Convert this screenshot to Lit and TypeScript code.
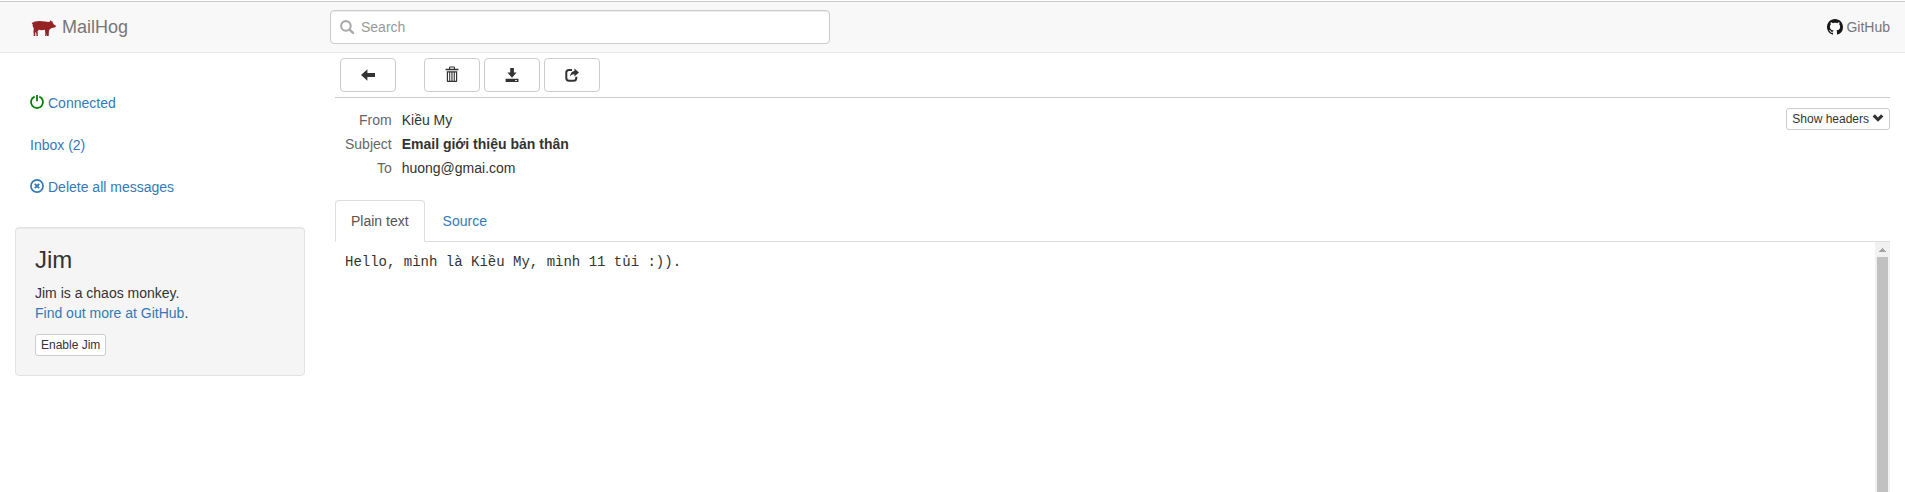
import { LitElement, html, css, svg } from "lit";
import { customElement, property } from "lit/decorators.js";

const shapes: Record<string, unknown> = {
  off: svg`<path d="M4.7 1.6A6 6 0 1 0 9.3 1.6" fill="none" stroke="currentColor" stroke-width="1.8"/><path d="M6.1 0h1.8v6.2H6.1z"/>`,
  remove: svg`<circle cx="7" cy="7" r="6.05" fill="none" stroke="currentColor" stroke-width="1.7"/><path d="M4.8 4.8l4.4 4.4M9.2 4.8L4.8 9.2" stroke="currentColor" stroke-width="1.9"/>`,
  search: svg`<circle cx="5.9" cy="5.9" r="4.8" fill="none" stroke="currentColor" stroke-width="2.1"/><path d="M9.6 9.6l3.4 3.3" stroke="currentColor" stroke-width="2.5" stroke-linecap="round"/>`,
  arrow: svg`<path d="M0 7l6.4-5.8v3.9H14v3.8H6.4v3.9z"/>`,
  trash: svg`<path fill-rule="evenodd" d="M4 .8V-.5Q4-1.4 5-1.4h4q1 0 1 .9V.8h3.4v1.4H.6V.8zM5.1.8h3.8V-.4H5.1zM1.8 3.2h10.4V13q0 1-1 1H2.8q-1 0-1-1zM3 4.4v8.4h1.2V4.4zM5.2 4.4v8.4h1.2V4.4zM7.5 4.4v8.4h1.2V4.4zM9.8 4.4v8.4H11V4.4z"/>`,
  download: svg`<path fill-rule="evenodd" d="M5.2 0h3.7v4.5h2.7L7 9.8 2.4 4.5h2.8zM.6 10.7h12.9V14H.6zM10.2 12v.9h1.7V12z"/>`,
  share: svg`<path d="M7 1.9H4Q1.3 1.9 1.3 4.6v5.5q0 2.7 2.7 2.7h4.7q2.6 0 2.6-2.7V8.8" fill="none" stroke="currentColor" stroke-width="2"/><path d="M9.4.6L14 4.6 9.4 8.6V6.2Q6.6 6 5 8.5 5.6 3.3 9.4 3z"/>`,
};

@customElement("mh-icon")
export class MhIcon extends LitElement {
  @property() name = "";
  static styles = css`
    :host { display: inline-block; width: 14px; height: 14px; line-height: 0; flex: none; }
    svg { width: 14px; height: 14px; overflow: visible; fill: currentColor; display: block; }
  `;
  render() {
    return html`<svg viewBox="0 0 14 14" aria-hidden="true">${shapes[this.name]}</svg>`;
  }
}

@customElement("app-root")
export class AppRoot extends LitElement {
  static styles = css`
    * { box-sizing: border-box; }
    :host {
      display: flex; flex-direction: column; height: 492px; overflow: hidden; background: #fff;
      font: 14px/20px "Liberation Sans", Arial, sans-serif; color: #333;
    }
    a { color: #337ab7; text-decoration: none; }
    .navbar {
      flex: none; height: 52px; margin-top: 1px; display: flex; align-items: center;
      background: #f8f8f8; border-top: 1px solid #c9cccb; border-bottom: 1px solid #e7e7e7;
      padding: 0 15px;
    }
    .brand { display: flex; align-items: center; width: 315px; padding-left: 16px; font-size: 18px; color: #777; }
    .pig { width: 25px; height: 18px; margin: 2px 6px 0 0; }
    .search {
      display: flex; align-items: center; gap: 7px; width: 500px; height: 34px; padding: 0 9px;
      background: #fff; border: 1px solid #ccc; border-radius: 4px; color: #999;
      box-shadow: inset 0 1px 1px rgba(0, 0, 0, .075);
    }
    .search mh-icon { color: #aaa; }
    .github { display: flex; align-items: center; gap: 3px; margin-left: auto; color: #777; }
    .mark { width: 16px; height: 16px; fill: #181616; }
    .columns { flex: 1; min-height: 0; display: flex; gap: 30px; padding: 0 15px; }
    aside { width: 290px; padding-top: 30px; }
    .nav { display: flex; flex-direction: column; gap: 2px; margin-bottom: 20px; }
    .nav a { display: flex; align-items: center; gap: 4px; height: 40px; padding-left: 15px; }
    .nav mh-icon { margin-top: -2px; }
    .on { color: #008000; }
    .well {
      height: 149px; padding: 19px; background: #f5f5f5; border: 1px solid #e3e3e3;
      border-radius: 4px; box-shadow: inset 0 1px 1px rgba(0, 0, 0, .05);
    }
    h3 { margin: 0 0 10px; font-weight: 400; font-size: 24px; line-height: 26.4px; }
    p { margin: 0 0 10.6px; }
    button {
      font: inherit; color: #333; background: #fff; border: 1px solid #ccc; border-radius: 4px;
      display: flex; align-items: center; justify-content: center; padding: 0;
    }
    .small { height: 22px; padding: 0 5px; font-size: 12px; line-height: 18px; border-radius: 3px; }
    main { flex: 1; min-width: 0; display: flex; flex-direction: column; }
    .toolbar { flex: none; display: flex; gap: 4px; height: 45px; padding: 5px; border-bottom: 1px solid #ccc; }
    .toolbar button { width: 56px; height: 34px; }
    .back { margin-right: 24px; }
    .meta { flex: none; display: flex; align-items: flex-start; justify-content: space-between; height: 102px; padding-top: 10px; }
    dl { display: grid; grid-template-columns: 56.7px auto; column-gap: 10px; row-gap: 4px; margin: 2px 0 0; }
    dt { text-align: right; color: #666; }
    dd { margin: 0; }
    .subject { font-weight: 700; }
    .chevron { width: 12px; height: 12px; margin: -2px 0 0 3px; }
    .tabs { flex: none; display: flex; gap: 2px; height: 42px; border-bottom: 1px solid #ddd; }
    .tab { height: 42px; padding: 10px 15px; border: 1px solid transparent; border-radius: 4px 4px 0 0; }
    .active { color: #555; background: #fff; border-color: #ddd #ddd #fff; }
    .body { flex: 1; min-height: 0; display: flex; justify-content: space-between; }
    pre { margin: 0; padding: 10px; font: 14px/20px "Liberation Mono", monospace; }
    .track { width: 15px; display: flex; flex-direction: column; align-items: center; background: #f1f1f1; }
    .up { width: 7px; height: 4px; margin: 6px 0 5px; fill: #a3a3a3; }
    .thumb { width: 11px; flex: 1; background: #c1c1c1; }
  `;

  render() {
    return html`
      <header class="navbar">
        <div class="brand">
          <svg class="pig" viewBox="0 0 25 18" fill="#952225" aria-hidden="true">
            <path d="M1 3.2L1.9 4Q2.2 2.8 4 2.4Q9 1.6 14 2.6L17.5 2.9L19 2.6L19.4 1.1L20.6 2.6L21.4 2.2L21.7 3.6L22.8 5.4L24.9 6.7L24.7 8L23.3 8.6L20.6 8.9L18.6 10.6L17.9 12L17.7 16.9H15.9L15.8 15L15.3 16.9H14L14.4 15.5L13.9 10.8Q10.5 11.6 7.8 10.8L6.6 12.2L6.9 16.9H5.3L5.5 16L4.9 13L4.2 14L4.3 16.9H2.5L2.8 15.5L2.4 12.5L2.8 9.5L1.6 6.8L1.7 5.2L.9 4.4Z"/>
          </svg>MailHog
        </div>
        <div class="search"><mh-icon name="search"></mh-icon><span>Search</span></div>
        <a class="github">
          <svg class="mark" viewBox="0 0 16 16" aria-hidden="true"><path d="M8 0C3.58 0 0 3.58 0 8c0 3.54 2.29 6.53 5.47 7.59.4.07.55-.17.55-.38 0-.19-.01-.82-.01-1.49-2.01.37-2.53-.49-2.69-.94-.09-.23-.48-.94-.82-1.13-.28-.15-.68-.52-.01-.53.63-.01 1.08.58 1.23.82.72 1.21 1.87.87 2.33.66.07-.52.28-.87.51-1.07-1.78-.2-3.64-.89-3.64-3.95 0-.87.31-1.59.82-2.15-.08-.2-.36-1.02.08-2.12 0 0 .67-.21 2.2.82.64-.18 1.32-.27 2-.27s1.36.09 2 .27c1.53-1.04 2.2-.82 2.2-.82.44 1.1.16 1.92.08 2.12.51.56.82 1.27.82 2.15 0 3.07-1.87 3.75-3.65 3.95.29.25.54.73.54 1.48 0 1.07-.01 1.93-.01 2.2 0 .21.15.46.55.38A8.01 8.01 0 0 0 16 8c0-4.42-3.58-8-8-8z"/></svg>
          GitHub
        </a>
      </header>
      <div class="columns">
        <aside>
          <nav class="nav">
            <a><mh-icon class="on" name="off"></mh-icon>Connected</a>
            <a>Inbox (2)</a>
            <a><mh-icon name="remove"></mh-icon>Delete all messages</a>
          </nav>
          <section class="well">
            <h3>Jim</h3>
            <p>Jim is a chaos monkey.<br><a>Find out more at GitHub</a>.</p>
            <button class="small">Enable Jim</button>
          </section>
        </aside>
        <main>
          <div class="toolbar">
            <button class="back" aria-label="Back"><mh-icon name="arrow"></mh-icon></button>
            <button aria-label="Delete"><mh-icon name="trash"></mh-icon></button>
            <button aria-label="Download"><mh-icon name="download"></mh-icon></button>
            <button aria-label="Release"><mh-icon name="share"></mh-icon></button>
          </div>
          <div class="meta">
            <dl>
              <dt>From</dt><dd>Kiều My</dd>
              <dt>Subject</dt><dd class="subject">Email giới thiệu bản thân</dd>
              <dt>To</dt><dd>huong@gmai.com</dd>
            </dl>
            <button class="small">Show headers<svg class="chevron" viewBox="0 0 12 12" aria-hidden="true"><path d="M2.9 2.3L6 5.4l3.1-3.1 2.3 2.2L6 9.8.6 4.5z" fill="#333"/></svg></button>
          </div>
          <nav class="tabs"><a class="tab active">Plain text</a><a class="tab">Source</a></nav>
          <div class="body">
            <pre>Hello, mình là Kiều My, mình 11 tủi :)).</pre>
            <div class="track">
              <svg class="up" viewBox="0 0 7 4" shape-rendering="crispEdges"><path d="M3 0h1v1h1v1h1v1h1v1H0V3h1V2h1V1h1z"/></svg>
              <div class="thumb"></div>
            </div>
          </div>
        </main>
      </div>
    `;
  }
}
